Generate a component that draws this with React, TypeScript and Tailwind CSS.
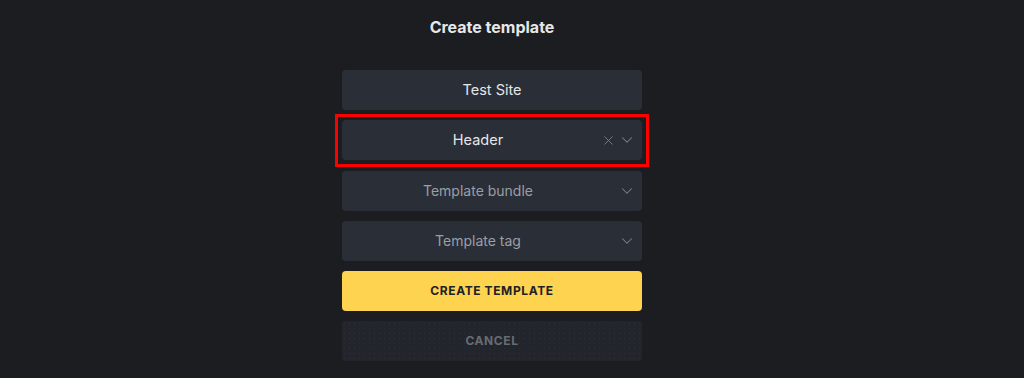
import { ChevronDown, X } from "lucide-react";

const font = { fontFamily: "Inter, 'Noto Sans', sans-serif" };

function SelectField({
  label,
  placeholder,
  clearable,
}: {
  label: string;
  placeholder?: boolean;
  clearable?: boolean;
}) {
  return (
    <div className="relative flex h-10 w-full items-center justify-center rounded-[4px] bg-[#2a2e36] pr-[28px]">
      <span className={placeholder ? "text-[14px] text-[#9a9ea6]" : "text-[14.5px] text-[#e4e6ea]"}>
        {label}
      </span>
      <div className="absolute right-[6px] top-1/2 flex -translate-y-1/2 items-center gap-[2px] text-[#7d828b]">
        {clearable && <X size={15} strokeWidth={1.4} />}
        <ChevronDown size={18} strokeWidth={1.4} />
      </div>
    </div>
  );
}

export default function App() {
  return (
    <div className="flex h-[378px] w-full flex-col items-center bg-[#1b1d21] pr-[40px]" style={font}>
      <h1 className="mt-[15px] text-[16px] font-bold text-[#e6e7ea]">Create template</h1>

      <div className="mt-[31px] flex w-[300px] flex-col gap-[10.25px]">
        <div className="flex h-10 w-full items-center justify-center rounded-[4px] bg-[#2a2e36] text-[14.5px] text-[#e4e6ea]">
          Test Site
        </div>

        <div className="relative">
          <div className="pointer-events-none absolute -inset-x-[7px] -top-[6px] -bottom-[7px] border-[3px] border-[#ff0000]" />
          <SelectField label="Header" clearable />
        </div>

        <SelectField label="Template bundle" placeholder />
        <SelectField label="Template tag" placeholder />

        <button
          type="button"
          className="flex h-10 w-full items-center justify-center rounded-[4px] bg-[#fdd34f] text-[12px] font-bold tracking-[0.05em] text-[#1f2126]"
        >
          CREATE TEMPLATE
        </button>

        <button
          type="button"
          className="flex h-10 w-full items-center justify-center rounded-[4px] bg-[#22252b] bg-[radial-gradient(circle,#2c3038_0.8px,transparent_1px)] bg-[length:5px_5px] text-[12px] font-bold tracking-[0.05em] text-[#686c74]"
        >
          CANCEL
        </button>
      </div>
    </div>
  );
}
